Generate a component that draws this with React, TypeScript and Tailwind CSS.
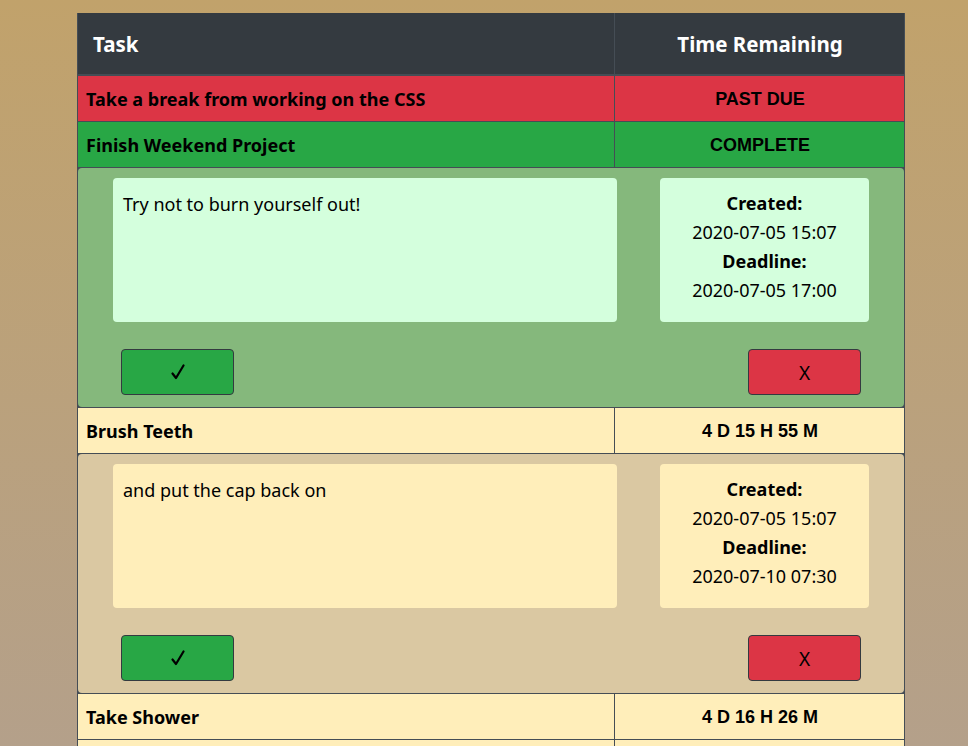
type Task = {
  title: string
  remaining: string
  tone: 'danger' | 'success' | 'warning'
  note?: string
  created?: string
  deadline?: string
}

const tasks: Task[] = [
  { title: 'Take a break from working on the CSS', remaining: 'PAST DUE', tone: 'danger' },
  {
    title: 'Finish Weekend Project',
    remaining: 'COMPLETE',
    tone: 'success',
    note: 'Try not to burn yourself out!',
    created: '2020-07-05 15:07',
    deadline: '2020-07-05 17:00',
  },
  {
    title: 'Brush Teeth',
    remaining: '4 D 15 H 55 M',
    tone: 'warning',
    note: 'and put the cap back on',
    created: '2020-07-05 15:07',
    deadline: '2020-07-10 07:30',
  },
  { title: 'Take Shower', remaining: '4 D 16 H 26 M', tone: 'warning' },
  { title: 'Go to bed', remaining: '4 D 20 H 0 M', tone: 'warning' },
]

const rowBg = {
  danger: 'bg-[#dc3545]',
  success: 'bg-[#28a745]',
  warning: 'bg-[#ffeeba]',
}

const sans = "font-['Segoe_UI','Noto_Sans',sans-serif]"
const arial = "font-['Liberation_Sans',Arial,sans-serif]"

export default function App() {
  return (
    <div className="h-[746px] overflow-hidden bg-gradient-to-b from-[#c1a26b] to-[#b4a08a] pl-[77px] pt-[13px]">
      <div className="w-[828px] border-x border-[#454d55]">
        {/* ヘッダー */}
        <div className={`grid grid-cols-[536px_291px] h-[63px] bg-[#343a40] text-white font-bold text-[20.5px] border-b-2 border-[#454d55] ${sans}`}>
          <div className="flex items-center px-[15px] pt-[2px]">Task</div>
          <div className="flex items-center justify-center border-l border-[#454d55] pt-[2px]">Time Remaining</div>
        </div>

        {tasks.map((t) => (
          <div key={t.title}>
            <div className={`grid grid-cols-[536px_291px] h-[46px] border-b border-[#454d55] ${rowBg[t.tone]}`}>
              <div className={`flex items-center px-2 pt-[2px] font-bold text-[18px] text-black ${sans}`}>{t.title}</div>
              <div className={`flex items-center justify-center pt-[2px] border-l border-[#454d55] font-bold text-[18px] text-black ${arial}`}>
                {t.remaining}
              </div>
            </div>
            {t.note && <Detail task={t} />}
          </div>
        ))}
      </div>
    </div>
  )
}

function Detail({ task }: { task: Task }) {
  const green = task.tone === 'success'
  const box = green ? 'bg-[#d4ffdd]' : 'bg-[#ffeeba]'
  return (
    <div className="bg-[#454d55] border-b border-[#454d55]">
      <div className={`h-[239px] rounded-[4px] pt-[10px] ${green ? 'bg-[#85b87c]' : 'bg-[#dac8a2]'} ${sans}`}>
        <div className="flex pl-[35px]">
          <div className={`w-[504px] h-[144px] rounded-[4px] px-[10px] py-[13px] text-[18px] text-black leading-[26px] ${box}`}>
            {task.note}
          </div>
          <div className={`ml-[43px] w-[209px] h-[144px] rounded-[4px] pt-[11px] flex flex-col items-center text-[18px] leading-[29px] text-black ${box}`}>
            <div className="font-bold">Created:</div>
            <div>{task.created}</div>
            <div className="font-bold">Deadline:</div>
            <div>{task.deadline}</div>
          </div>
        </div>
        <div className="flex justify-between px-[43px] mt-[27px]">
          <button className="w-[113px] h-[46px] rounded-[4px] border border-[#343a40] bg-[#28a745] flex items-center justify-center">
            <svg width="16" height="16" viewBox="0 0 16 16" fill="none" stroke="black" strokeWidth="2.2" strokeLinecap="round" strokeLinejoin="round">
              <path d="M2.5 9.5 L6 14 L13.5 1.5" />
            </svg>
          </button>
          <button className={`w-[113px] h-[46px] rounded-[4px] border border-[#343a40] bg-[#dc3545] text-black text-[19px] pt-[3px] ${sans}`}>
            X
          </button>
        </div>
      </div>
    </div>
  )
}
